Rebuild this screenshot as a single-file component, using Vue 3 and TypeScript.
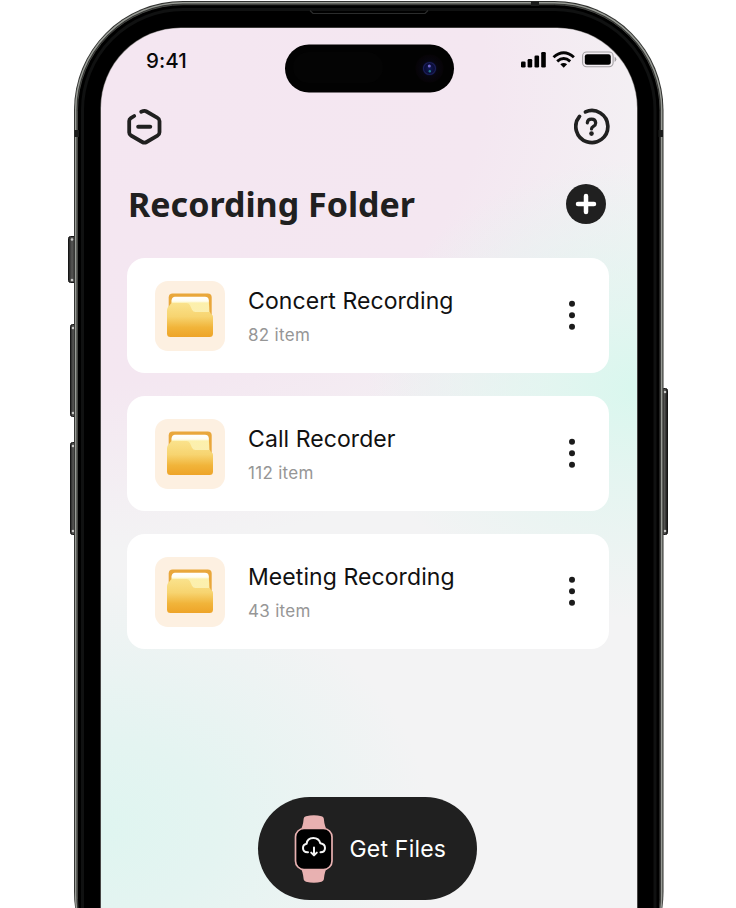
<script setup lang="ts">
interface Folder {
  name: string
  count: number
}

const folders: Folder[] = [
  { name: 'Concert Recording', count: 82 },
  { name: 'Call Recorder', count: 112 },
  { name: 'Meeting Recording', count: 43 },
]
</script>

<template>
  <div class="stage">
    <svg class="shell" viewBox="0 0 736 908" aria-hidden="true">
      <defs>
        <linearGradient id="button-metal" x1="0" x2="1" y1="0" y2="0">
          <stop offset="0" stop-color="#222" />
          <stop offset=".45" stop-color="#585856" />
          <stop offset="1" stop-color="#111" />
        </linearGradient>
      </defs>
      <g fill="url(#button-metal)" stroke="#161616" stroke-width="1">
        <rect x="68.5" y="236.5" width="8" height="46" rx="2" />
        <rect x="70.5" y="324.500" width="6" height="92" rx="2" />
        <rect x="70.5" y="442.500" width="6" height="92" rx="2" />
        <rect x="661.500" y="388.500" width="6" height="146" rx="2" />
      </g>
      <g fill="#c9c9c7">
        <circle cx="72" cy="239.500" r="1.300" />
        <circle cx="72" cy="280" r="1.300" />
        <circle cx="73" cy="328" r="1.300" />
        <circle cx="73" cy="413" r="1.300" />
        <circle cx="73" cy="446" r="1.300" />
        <circle cx="73" cy="531" r="1.300" />
        <circle cx="665" cy="392" r="1.300" />
        <circle cx="665" cy="531" r="1.300" />
      </g>
      <rect x="74" y="1" width="589.500" height="1000" rx="109" fill="#30312f" />
      <rect x="75.700" y="2.700" width="586" height="1000" rx="107.300" fill="none" stroke="#989b95" stroke-width="1.500" />
      <rect x="77.500" y="4.700" width="582.500" height="1000" rx="105.500" fill="#000" stroke="#444542" stroke-width="1" />
      <rect x="82.500" y="9.500" width="572.500" height="1000" rx="100.500" fill="none" stroke="#101111" stroke-width="3" />
      <path d="M310 10.500l3 3h112l3-3" fill="none" stroke="#2b2c2c" stroke-width="1.200" />
      <g fill="#1b1c1b">
        <rect x="74.500" y="130" width="4.500" height="7" />
        <rect x="658.500" y="130" width="4.500" height="7" />
        <rect x="531" y="1.500" width="8" height="4.500" />
      </g>
    </svg>

    <main class="screen">
      <header class="status">
        <span class="time">9:41</span>
        <svg class="signals" width="97" height="20" viewBox="0 0 97 20" aria-hidden="true">
          <g>
            <rect x="1" y="11.500" width="4.600" height="6" rx="1.300" />
            <rect x="7.600" y="9" width="4.600" height="8.500" rx="1.300" />
            <rect x="14.500" y="5.500" width="4.600" height="12" rx="1.300" />
            <rect x="21.200" y="2" width="4.600" height="15.500" rx="1.300" />
          </g>
          <g fill="none" stroke="#050505" stroke-width="2.900">
            <path d="M33.500 7.300Q43.700-2 53.900 7.300" />
            <path d="M37.200 11.300Q43.700 5.600 50.200 11.300" />
          </g>
          <path d="M40.300 14.300Q43.700 11.500 47.100 14.300L43.700 17.800Z" />
          <rect x="62.600" y="2" width="30.500" height="14.800" rx="4" fill="none" stroke="#a29fa2" stroke-width="1.100" />
          <rect x="64.800" y="4.200" width="26" height="10.500" rx="2.300" />
          <path d="M94.600 6.700v5.200q1.700-.7 1.700-2.600t-1.700-2.600Z" fill="#a29fa2" />
        </svg>
      </header>

      <nav class="toolbar">
        <svg width="36" height="38" viewBox="0 0 36 38" fill="none" stroke="#202020" stroke-width="3.800" stroke-linecap="round" stroke-linejoin="round">
          <path d="M7.200 8L3.800 10.100Q2.200 11.100 2.200 13V24.500Q2.200 26.500 4 27.500L15.200 34Q17.400 35.300 19.600 34L30.500 27.700Q32.500 26.500 32.500 24.300V13Q32.500 11 30.500 9.900L19.500 3.500Q17.500 2.300 14.200 3.800" />
          <path d="M11.200 18.800H23.200" stroke-width="4" />
        </svg>
        <svg width="36" height="38" viewBox="0 0 36 38" fill="none" stroke="#202020" stroke-width="3.700" stroke-linecap="round">
          <path d="M11.500 3.900A16 16 0 1 1 5.500 8.400" />
          <path d="M13.300 14.900Q13.500 11.200 17.500 11.200T21.700 14.900Q21.700 17 19.400 18.400Q17.500 19.600 17.500 21" stroke-width="3.200" />
          <circle cx="17.500" cy="25.600" r="2.300" fill="#202020" stroke="none" />
        </svg>
      </nav>

      <section class="heading">
        <h1>Recording Folder</h1>
        <button class="add" aria-label="Add folder">
          <svg width="40" height="40" viewBox="0 0 40 40">
            <circle cx="20" cy="20" r="20" fill="#202020" />
            <path d="M12 20H28M20 12V28" stroke="#fff" stroke-width="4.500" stroke-linecap="round" />
          </svg>
        </button>
      </section>

      <ul class="folders">
        <li v-for="folder in folders" :key="folder.name" class="card">
          <div class="tile">
            <svg width="48" height="46" viewBox="0 0 48 46">
              <defs>
                <linearGradient id="folder-front" x1="0" y1="0" x2="0" y2="1">
                  <stop offset="0" stop-color="#fae28c" />
                  <stop offset=".4" stop-color="#f7d470" />
                  <stop offset=".72" stop-color="#f1b43a" />
                  <stop offset="1" stop-color="#eea428" />
                </linearGradient>
                <linearGradient id="folder-paper" x1="0" y1="0" x2="0" y2="1">
                  <stop offset="0" stop-color="#fff" />
                  <stop offset=".24" stop-color="#fffdf0" />
                  <stop offset=".34" stop-color="#fcf0ac" />
                  <stop offset="1" stop-color="#fbeeb0" />
                </linearGradient>
              </defs>
              <rect x="2.700" y=".5" width="43" height="34" rx="4" fill="#e9a73b" />
              <path d="M5.500 7.500Q6 3.800 9 3.800H39Q42.300 3.800 42.800 7L43.600 22H5Z" fill="url(#folder-paper)" />
              <path d="M1 18Q1 14 3.500 12.500Q4.300 10 7 10H20.500Q22.700 10 24 12.200L26 16.800Q27.100 19 29.500 19H44Q44.700 21 45.800 21.500Q47 22.300 47 24V40.500Q47 44 43.500 44H4.500Q1 44 1 40.500Z" fill="url(#folder-front)" />
            </svg>
          </div>
          <div class="label">
            <h2>{{ folder.name }}</h2>
            <p>{{ folder.count }} item</p>
          </div>
          <svg class="more" width="8" height="32" viewBox="0 0 8 32" fill="#1b1b1b">
            <circle cx="4" cy="3.700" r="3" />
            <circle cx="4" cy="15.200" r="3" />
            <circle cx="4" cy="26.700" r="3" />
          </svg>
        </li>
      </ul>

      <button class="get">
        <svg width="40" height="70" viewBox="0 0 40 70">
          <path d="M5.500 18Q9 13 9.700 4.500Q10 2.900 12 2.300Q20 .2 27.500 2.300Q29.500 2.900 29.800 4.500Q30.500 13 34 18Z" fill="#e8b1b1" />
          <path d="M5.500 52Q9 57 9.700 65.500Q10 67.100 12 67.700Q20 69.800 27.500 67.700Q29.500 67.100 29.800 65.500Q30.500 57 34 52Z" fill="#e8b1b1" />
          <rect x="1.500" y="14.500" width="36.500" height="41" rx="8.500" fill="#000" stroke="#e8b1b1" stroke-width="1.700" />
          <g fill="none" stroke="#f5f5f5" stroke-width="2" stroke-linecap="round" stroke-linejoin="round">
            <path d="M14 38.300H13.500Q9 38.100 9 34Q9 30.600 12.600 29.800Q13.300 24 19.300 24Q25 24 26.300 29.300Q31 30 31 34Q31 38.200 26.500 38.300" />
            <path d="M20 33.500V41M17.200 38.600L20 41.400L22.800 38.600" />
          </g>
        </svg>
        <span>Get Files</span>
      </button>
    </main>

    <svg class="island" width="170" height="49" viewBox="0 0 170 49" aria-hidden="true">
      <defs>
        <radialGradient id="lens">
          <stop offset="0" stop-color="#111b56" />
          <stop offset=".38" stop-color="#0b0c35" />
          <stop offset=".55" stop-color="#07060f" />
          <stop offset="1" stop-color="#060306" />
        </radialGradient>
      </defs>
      <rect y=".5" width="169" height="48" rx="24" fill="#020202" />
      <rect x="8" y="8" width="90" height="31" rx="15.500" fill="#040404" />
      <circle cx="144.500" cy="24.500" r="14" fill="url(#lens)" />
      <circle cx="144.500" cy="24.500" r="6" fill="none" stroke="#1b1f58" stroke-width="1.200" />
      <circle cx="144.300" cy="22" r="1.500" fill="#7369cf" />
      <circle cx="144.800" cy="27.300" r="1.200" fill="#227d8c" />
    </svg>
  </div>
</template>

<style>
body {
  margin: 0;
  background: #fff;
}
</style>

<style scoped>
.stage {
  position: relative;
  width: 736px;
  height: 908px;
  overflow: hidden;
  display: flex;
  box-sizing: border-box;
  padding: 28px 99px 0 101px;
  font-family: Inter, "Liberation Sans", sans-serif;
}
.shell {
  position: absolute;
  inset: 0;
  width: 736px;
  height: 908px;
}
.screen {
  position: relative;
  flex: 1;
  box-sizing: border-box;
  padding: 17px 28px 0 26px;
  border-radius: 80px 80px 0 0;
  box-shadow: 0 0 0 .6px #777573;
  display: flex;
  flex-direction: column;
  background:
    radial-gradient(ellipse 330px 255px at 0% 91%, #dff5f0 0%, #e4f4f1 35%, #f3f4f500 100%),
    radial-gradient(ellipse 270px 230px at 100% 41%, #d9f7ee 0%, #def6efbb 35%, #f3f4f500 100%),
    radial-gradient(ellipse 600px 470px at 0% 6%, #f4e6f1 0%, #f4e7f1 64%, #f3f4f500 100%),
    #f3f3f4;
}
.status {
  height: 30px;
  display: flex;
  align-items: center;
  justify-content: space-between;
  margin: 0 -8px 0 19px;
}
.time {
  font: 500 20.500px/30px Inter, sans-serif;
  color: #080808;
  letter-spacing: .1px;
  padding-top: 1px;
}
.signals {
  display: block;
}
.toolbar {
  height: 38px;
  margin-top: 33px;
  display: flex;
  justify-content: space-between;
  margin-right: -1px;
}
.heading {
  height: 40px;
  margin: 38px 3px 0 1px;
  display: flex;
  align-items: center;
  justify-content: space-between;
}
h1 {
  margin: 0;
  font: 700 34px/40px "Noto Sans", sans-serif;
  color: #202020;
  white-space: nowrap;
}
button {
  border: 0;
  padding: 0;
  background: none;
}
.add {
  display: flex;
}
.folders {
  list-style: none;
  margin: 34px 0 0;
  padding: 0;
  display: grid;
  gap: 23px;
}
.card {
  height: 115px;
  box-sizing: border-box;
  padding: 0 33px 0 28px;
  border-radius: 18px;
  background: #fff;
  display: flex;
  align-items: center;
}
.tile {
  width: 70px;
  height: 70px;
  border-radius: 13px;
  background: #fdf0e1;
  display: flex;
  align-items: center;
  justify-content: center;
}
.label {
  flex: 1;
  margin-left: 23px;
}
h2 {
  margin: 0;
  padding-top: 1px;
  font-size: 23px;
  line-height: 30px;
  font-weight: 400;
  letter-spacing: .08px;
  color: #111;
}
p {
  margin: 8px 0 0;
  font-size: 17px;
  line-height: 22px;
  letter-spacing: .3px;
  color: #969696;
}
.get {
  align-self: center;
  width: 219px;
  height: 103px;
  margin: 148px 2px 0 0;
  box-sizing: border-box;
  padding: 0 30px 0 36px;
  border-radius: 52px;
  background: #202020;
  color: #fff;
  display: flex;
  align-items: center;
  font: 400 23px/30px Inter, "Liberation Sans", sans-serif;
  letter-spacing: .2px;
  white-space: nowrap;
  gap: 16px;
}
.get span {
  padding-top: 1px;
}
.get svg {
  flex: none;
}
.island {
  position: absolute;
  left: 285px;
  top: 44px;
}
</style>
